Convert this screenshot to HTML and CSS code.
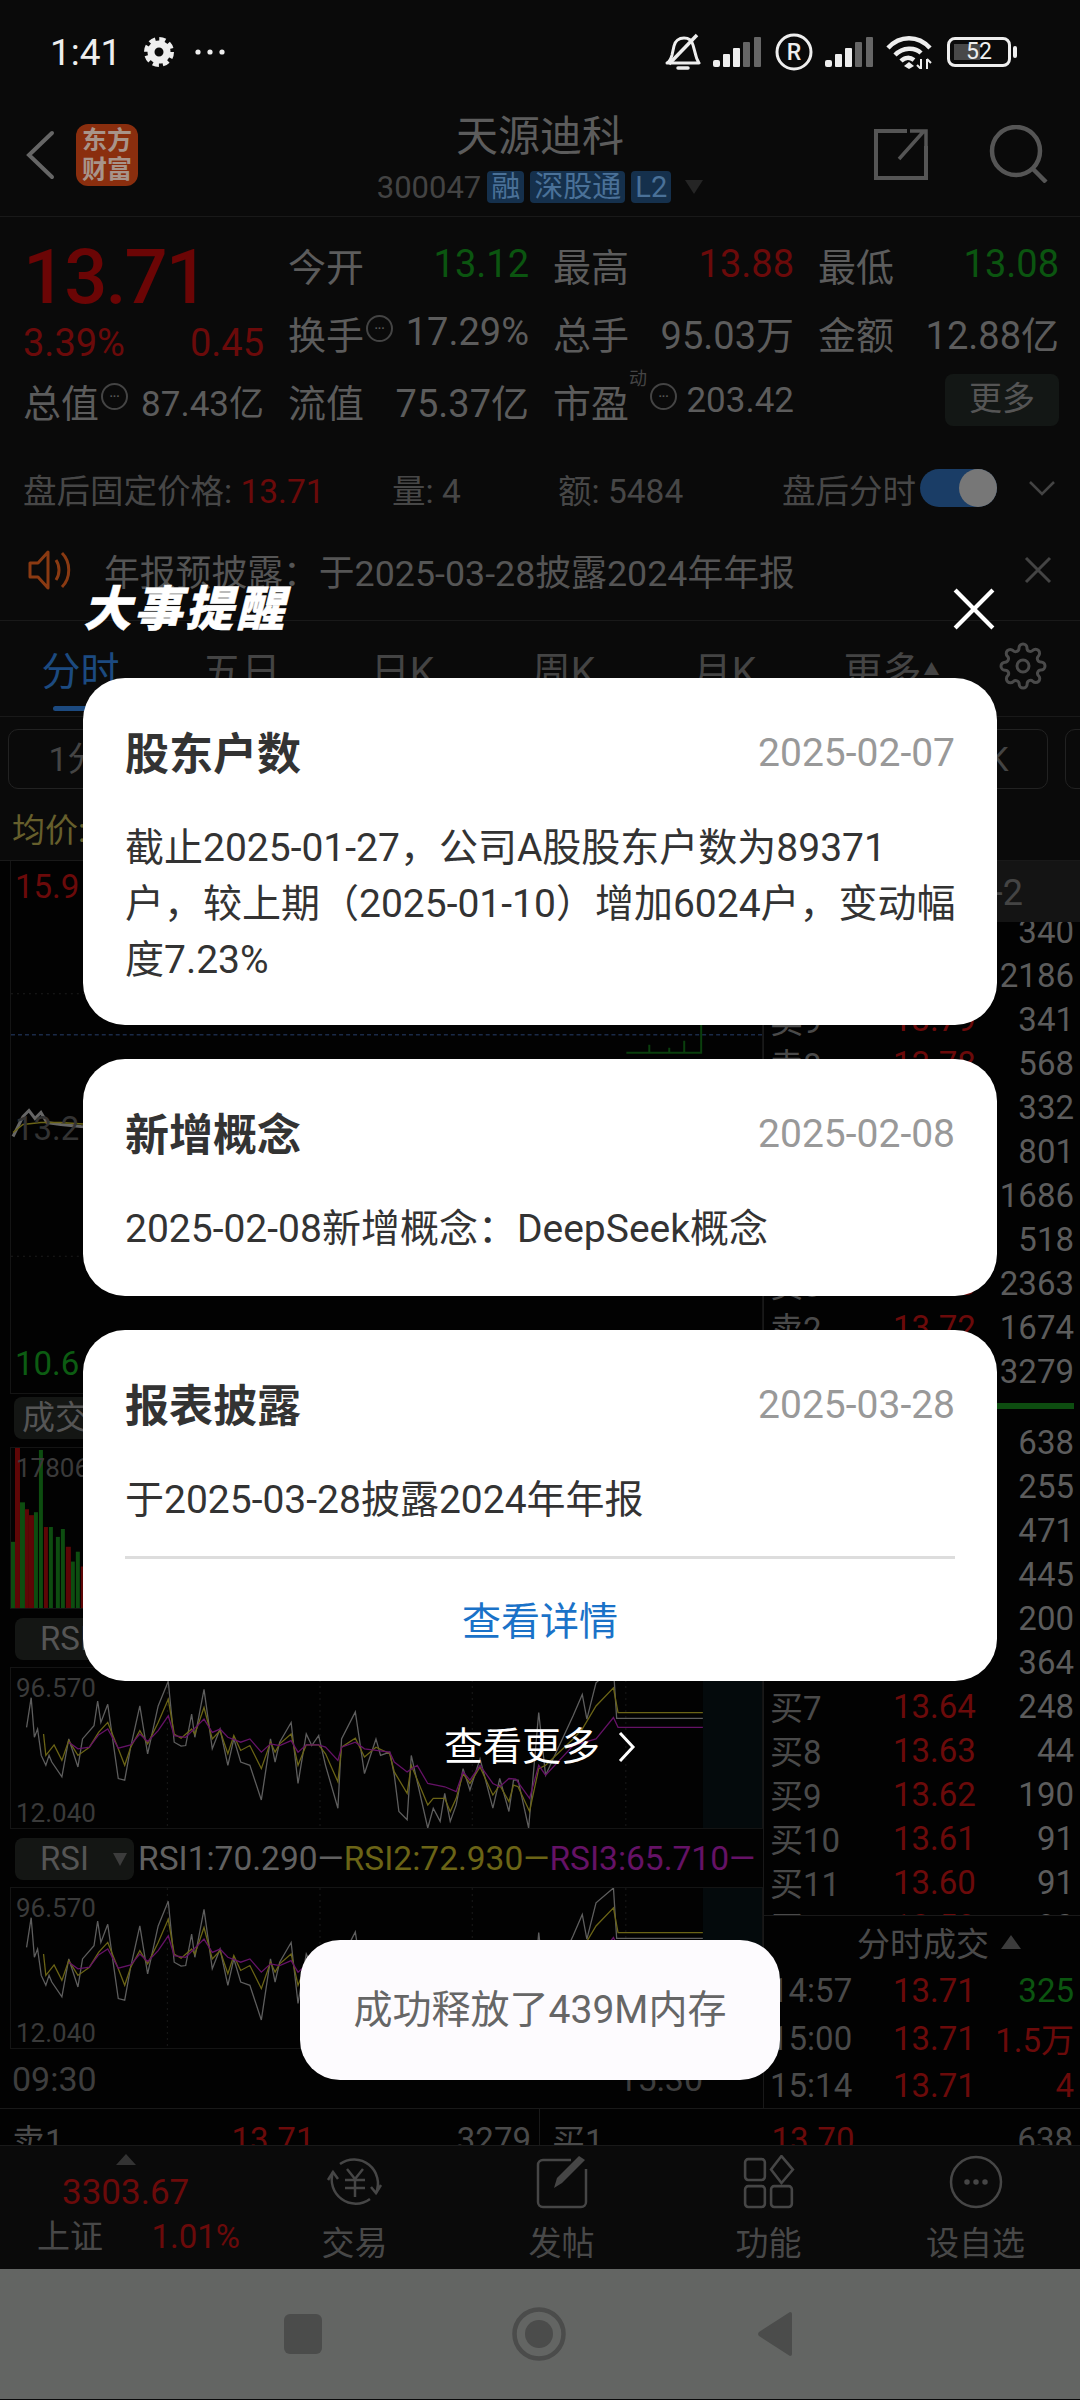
FILE: index.html
```html
<!DOCTYPE html>
<html lang="zh-CN">
<head>
    <meta charset="UTF-8">
    <meta name="viewport" content="width=device-width, initial-scale=1.0">
    <title>天源迪科</title>
    <link rel="stylesheet" href="styles.css">
</head>
<body>
<div class="screen">

    <!-- status bar -->
    <div class="status-bar">
        <div class="status-left">
            <span class="clock">1:41</span>
            <svg class="st-gear" viewBox="0 0 30 32"><circle cx="15" cy="16" r="8" fill="none" stroke="#eee" stroke-width="7"/><circle cx="15" cy="16" r="12.5" fill="none" stroke="#eee" stroke-width="5" stroke-dasharray="6 3.8"/></svg>
            <svg class="st-dots" viewBox="0 0 32 8"><circle cx="4" cy="4" r="2.6" fill="#eee"/><circle cx="16" cy="4" r="2.6" fill="#eee"/><circle cx="28" cy="4" r="2.6" fill="#eee"/></svg>
        </div>
        <div class="status-right">
            <svg class="st-bell" viewBox="0 0 36 38"><path d="M2 30c3-2 4-4 5-8l2-9c1-5 5-8 10-8s8 3 9 7l3 11c.5 3 2 5 3 7z" fill="none" stroke="#eee" stroke-width="3" stroke-linejoin="round"/><path d="M13 35h10" stroke="#eee" stroke-width="3.5" stroke-linecap="round"/><path d="M32 2 4 31" stroke="#eee" stroke-width="3.5"/></svg>
            <svg class="st-signal" viewBox="0 0 48 30"><rect x="0" y="23" width="7" height="7" rx="2" fill="#eee"/><rect x="10" y="17" width="7" height="13" rx="1" fill="#eee"/><rect x="20" y="11" width="7" height="19" rx="1" fill="#eee"/><rect x="30" y="5" width="7" height="25" rx="1" fill="#666"/><rect x="41" y="0" width="7" height="30" rx="1" fill="#666"/></svg>
            <svg class="st-r" viewBox="0 0 38 38"><circle cx="19" cy="19" r="17" fill="none" stroke="#eee" stroke-width="3"/><text x="19" y="27" text-anchor="middle" class="st-r-text">R</text></svg>
            <svg class="st-signal" viewBox="0 0 48 30"><rect x="0" y="23" width="7" height="7" rx="2" fill="#eee"/><rect x="10" y="17" width="7" height="13" rx="1" fill="#eee"/><rect x="20" y="11" width="7" height="19" rx="1" fill="#eee"/><rect x="30" y="5" width="7" height="25" rx="1" fill="#666"/><rect x="41" y="0" width="7" height="30" rx="1" fill="#666"/></svg>
            <svg class="st-wifi" viewBox="0 0 46 34"><path d="M2 13c12-13 30-13 42 0M9 20c8-8 20-8 26-2M15 26c4-4 9-4 13-1" fill="none" stroke="#eee" stroke-width="4.5"/><path d="M23 27l5 4-5 3-5-3z" fill="#eee"/><path d="M35 24v10M31 30l4 4M41 34V24M45 28l-4-4" fill="none" stroke="#eee" stroke-width="2"/></svg>
            <div class="battery"><div class="battery-body"><span class="battery-fill"></span><span class="battery-num">52</span></div><div class="battery-cap"></div></div>
        </div>
    </div>

    <!-- stock header -->
    <div class="stock-head">
        <div class="head-left">
            <svg class="back" viewBox="0 0 30 50"><path d="M27 3 4 25l23 22" fill="none" stroke="#666" stroke-width="4" stroke-linecap="round"/></svg>
            <div class="logo">东方<br>财富</div>
        </div>
        <div class="head-center">
            <div class="stock-name">天源迪科</div>
            <div class="stock-sub">
                <span class="stock-code">300047</span>
                <span class="tag tag-a">融</span>
                <span class="tag tag-b">深股通</span>
                <span class="tag tag-c">L2</span>
                <span class="tag-arrow"></span>
            </div>
        </div>
        <div class="head-right">
            <svg class="share" viewBox="0 0 54 52"><path d="M33 3H2v47h50V18" fill="none" stroke="#555" stroke-width="4"/><path d="M25 31 50 3M36 3h16v16" fill="none" stroke="#555" stroke-width="3.5"/></svg>
            <svg class="search" viewBox="0 0 60 58"><circle cx="27" cy="26" r="24" fill="none" stroke="#555" stroke-width="4.5"/><path d="m43 43 14 14" stroke="#555" stroke-width="4.5"/></svg>
        </div>
    </div>

    <!-- quote block -->
    <div class="quote">
        <div class="price-box">
            <div class="price">13.71</div>
            <div class="price-sub"><span>3.39%</span><span>0.45</span></div>
        </div>
        <div class="cell"><span>今开</span><span class="green">13.12</span></div>
        <div class="cell"><span>最高</span><span class="red">13.88</span></div>
        <div class="cell"><span>最低</span><span class="green">13.08</span></div>
        <div class="cell"><span class="lab">换手<i class="info">···</i></span><span>17.29%</span></div>
        <div class="cell"><span>总手</span><span>95.03万</span></div>
        <div class="cell"><span>金额</span><span>12.88亿</span></div>
        <div class="cell"><span class="lab">总值<i class="info">···</i></span><span class="small-val">87.43亿</span></div>
        <div class="cell"><span>流值</span><span>75.37亿</span></div>
        <div class="cell"><span class="lab">市盈<sup class="dyn">动</sup><i class="info">···</i></span><span class="small-val">203.42</span></div>
        <div class="cell cell-end"><span class="more-btn">更多</span></div>
    </div>

    <!-- after hours -->
    <div class="after">
        <span class="after-price">盘后固定价格: <b class="red">13.71</b></span>
        <span class="after-vol">量: 4</span>
        <span class="after-amt">额: 5484</span>
        <span class="after-time">盘后分时</span>
        <span class="toggle"><span class="toggle-knob"></span></span>
        <svg class="after-arrow" viewBox="0 0 28 16"><path d="m2 2 12 12L26 2" fill="none" stroke="#444" stroke-width="2.5"/></svg>
    </div>

    <!-- notice -->
    <div class="notice">
        <svg class="speaker" viewBox="0 0 46 42"><path d="M2 14h8L20 3v36L10 28H2z" fill="none" stroke="#8a3a12" stroke-width="3" stroke-linejoin="round"/><path d="M28 11c4 6 4 14 0 20M34 4c9 9 9 25 0 34" fill="none" stroke="#8a3a12" stroke-width="3"/></svg>
        <span class="notice-text">年报预披露：于2025-03-28披露2024年年报</span>
        <svg class="notice-close" viewBox="0 0 28 28"><path d="m2 2 24 24M26 2 2 26" stroke="#444" stroke-width="3"/></svg>
    </div>

    <!-- chart tabs -->
    <div class="tabs">
        <div class="tab tab-on">分时<span class="tab-line"></span></div>
        <div class="tab">五日</div>
        <div class="tab">日K</div>
        <div class="tab">周K</div>
        <div class="tab">月K</div>
        <div class="tab tab-more">更多<small>▲</small></div>
        <svg class="tab-gear" viewBox="0 0 24 24" fill="none" stroke="#4a4a4a" stroke-width="1.5"><path d="M12 15a3 3 0 1 0 0-6 3 3 0 0 0 0 6z"/><path d="M19.4 15a1.65 1.65 0 0 0 .33 1.82l.06.06a2 2 0 0 1 0 2.83 2 2 0 0 1-2.83 0l-.06-.06a1.65 1.65 0 0 0-1.82-.33 1.65 1.65 0 0 0-1 1.51V21a2 2 0 0 1-2 2 2 2 0 0 1-2-2v-.09A1.65 1.65 0 0 0 9 19.4a1.65 1.65 0 0 0-1.82.33l-.06.06a2 2 0 0 1-2.83 0 2 2 0 0 1 0-2.83l.06-.06a1.65 1.65 0 0 0 .33-1.82 1.65 1.65 0 0 0-1.51-1H3a2 2 0 0 1-2-2 2 2 0 0 1 2-2h.09A1.65 1.65 0 0 0 4.6 9a1.65 1.65 0 0 0-.33-1.82l-.06-.06a2 2 0 0 1 0-2.83 2 2 0 0 1 2.83 0l.06.06a1.65 1.65 0 0 0 1.82.33H9a1.65 1.65 0 0 0 1-1.51V3a2 2 0 0 1 2-2 2 2 0 0 1 2 2v.09a1.65 1.65 0 0 0 1 1.51 1.65 1.65 0 0 0 1.82-.33l.06-.06a2 2 0 0 1 2.83 0 2 2 0 0 1 0 2.83l-.06.06a1.65 1.65 0 0 0-.33 1.82V9a1.65 1.65 0 0 0 1.51 1H21a2 2 0 0 1 2 2 2 2 0 0 1-2 2h-.09a1.65 1.65 0 0 0-1.51 1z"/></svg>
    </div>

    <div class="periods">
        <div class="period">1分</div>
        <div class="period">5分</div>
        <div class="period">15分</div>
        <div class="period">30分</div>
        <div class="period">60分</div>
        <div class="period">季K</div>
        <div class="period">年K</div>
        <div class="period"></div>
    </div>

    <div class="avg-row"><span class="avg">均价:13.27</span></div>

    <!-- charts + order book -->
    <div class="market">
        <div class="charts">
            <div class="main-chart">
                <svg class="chart-svg" viewBox="0 0 753 533" preserveAspectRatio="none">
                    <path d="M0 133H753M0 396H753" stroke="#1c1c1c" stroke-width="1" stroke-dasharray="2 4"/>
                    <path d="M0 174H753" stroke="#1a2a48" stroke-width="1.5" stroke-dasharray="4 3"/>
                    <path d="M617 192h75v-28M640 192v-8M660 192v-5M675 192v-12" fill="none" stroke="#0a3f0d" stroke-width="2"/>
                    <path d="M2 276 8 264 12 256 18 250 24 258 30 252 36 262 50 264 70 266 110 268" fill="none" stroke="#666" stroke-width="3"/>
                    <path d="M2 272 12 264 30 262 50 262 110 266" fill="none" stroke="#6b6416" stroke-width="1.5"/>
                </svg>
                <span class="axis-red">15.9</span>
                <span class="axis-mid">13.2</span>
                <span class="axis-green">10.6</span>
            </div>
            <div class="ind-tab ind-tab-wide">成交量</div>
            <div class="vol-chart">
                <svg class="chart-svg" viewBox="0 0 753 162" preserveAspectRatio="none">
                    <g fill="#0d4d10">
                        <rect x="0" y="95" width="4" height="67"/><rect x="9" y="55" width="5" height="107"/><rect x="23" y="65" width="4" height="97"/><rect x="28" y="2" width="4" height="160"/><rect x="38" y="80" width="4" height="82"/><rect x="45" y="90" width="4" height="72"/><rect x="50" y="82" width="4" height="80"/><rect x="60" y="115" width="4" height="47"/><rect x="65" y="105" width="4" height="57"/>
                    </g>
                    <g fill="#5e0606">
                        <rect x="4" y="0" width="5" height="162"/><rect x="14" y="62" width="4" height="100"/><rect x="18" y="68" width="5" height="94"/><rect x="33" y="80" width="4" height="82"/><rect x="55" y="100" width="5" height="62"/><rect x="70" y="120" width="4" height="42"/>
                    </g>
                </svg>
                <span class="axis-small">17806</span>
            </div>
            <div class="ind-row"><div class="ind-tab">RSI<i class="ind-arrow"></i></div></div>
            <div class="rsi-chart">
                <svg class="chart-svg" viewBox="24 25 1638 485" preserveAspectRatio="none">
                    <defs>
                        <g id="rsi-lines">
                            <path d="M365 25V510M698 25V510M1030 25V510M1365 25V510" stroke="#1a1a1a" stroke-width="1" stroke-dasharray="2 4" vector-effect="non-scaling-stroke"/>
                            <rect x="1533" y="25" width="129" height="485" fill="#040a0c"/>
                            <polyline class="ln-gray" points="58,205 68,115 75,235 82,210 90,290 100,320 107,290 113,310 135,355 150,240 170,325 180,240 205,200 213,125 220,190 235,135 258,360 272,365 285,265 305,140 322,285 345,140 367,65 380,250 395,262 405,260 418,165 425,235 445,90 463,270 480,210 497,320 510,240 525,310 545,320 570,425 590,240 600,310 610,250 635,190 650,375 668,225 680,260 695,230 710,320 737,450 745,240 775,158 795,345 820,240 830,290 850,280 860,350 870,460 888,485 897,290 933,510 945,450 960,490 970,405 982,490 995,440 1010,330 1025,395 1047,300 1075,450 1090,360 1110,460 1120,365 1130,365 1153,510 1175,160 1190,350 1200,320 1250,170 1270,105 1280,180 1300,70 1338,25 1345,178 1533,178"/>
                            <polyline class="ln-yellow" points="95,225 100,290 118,258 135,305 150,245 170,290 195,265 215,220 235,190 258,270 272,320 285,265 305,215 322,255 345,190 367,120 380,225 395,238 418,210 425,225 445,145 463,240 480,215 497,285 510,230 525,275 545,260 570,330 590,250 600,280 610,255 635,225 650,320 668,258 695,258 710,285 737,370 745,265 775,238 795,295 820,265 850,285 860,340 888,405 897,320 933,440 945,420 970,420 982,460 995,420 1010,345 1025,375 1047,325 1075,410 1090,380 1110,430 1120,380 1130,385 1155,460 1175,330 1190,320 1250,240 1270,210 1300,140 1338,85 1348,160 1533,160"/>
                            <polyline class="ln-purple" points="150,250 170,270 195,265 215,228 235,210 258,268 285,258 305,225 322,248 345,215 367,170 380,230 405,235 445,180 463,220 480,210 497,235 525,250 545,240 570,280 590,255 610,260 635,245 650,280 668,258 695,258 710,265 737,305 745,265 775,250 795,270 850,280 860,310 888,340 910,320 933,375 970,385 995,400 1010,340 1025,365 1047,320 1075,375 1090,385 1110,360 1125,362 1155,420 1175,320 1190,350 1250,260 1300,240 1338,175 1348,205 1533,205"/>
                        </g>
                    </defs>
                    <use href="#rsi-lines"/>
                </svg>
                <span class="axis-small">96.570</span>
                <span class="axis-small axis-low">12.040</span>
            </div>
            <div class="ind-row">
                <div class="ind-tab">RSI<i class="ind-arrow"></i></div>
                <div class="legend"><span class="lg-gray">RSI1:70.290—</span><span class="lg-yellow">RSI2:72.930—</span><span class="lg-purple">RSI3:65.710—</span></div>
            </div>
            <div class="rsi-chart">
                <svg class="chart-svg" viewBox="24 25 1638 485" preserveAspectRatio="none"><use href="#rsi-lines"/></svg>
                <span class="axis-small">96.570</span>
                <span class="axis-small axis-low">12.040</span>
            </div>
            <div class="time-axis"><span>09:30</span><span>15:30</span></div>
        </div>

        <div class="book">
            <div class="book-head">-2</div>
            <div class="book-rows">
                <div class="book-sell">
                    <div class="row"><span>卖11</span><b>13.81</b><span>340</span></div>
                    <div class="row"><span>卖10</span><b>13.80</b><span>2186</span></div>
                    <div class="row"><span>卖9</span><b>13.79</b><span>341</span></div>
                    <div class="row"><span>卖8</span><b>13.78</b><span>568</span></div>
                    <div class="row"><span>卖7</span><b>13.77</b><span>332</span></div>
                    <div class="row"><span>卖6</span><b>13.76</b><span>801</span></div>
                    <div class="row"><span>卖5</span><b>13.75</b><span>1686</span></div>
                    <div class="row"><span>卖4</span><b>13.74</b><span>518</span></div>
                    <div class="row"><span>卖3</span><b>13.73</b><span>2363</span></div>
                    <div class="row"><span>卖2</span><b>13.72</b><span>1674</span></div>
                    <div class="row"><span>卖1</span><b>13.71</b><span>3279</span></div>
                </div>
                <div class="book-bar"></div>
                <div class="row"><span>买1</span><b>13.70</b><span>638</span></div>
                <div class="row"><span>买2</span><b>13.69</b><span>255</span></div>
                <div class="row"><span>买3</span><b>13.68</b><span>471</span></div>
                <div class="row"><span>买4</span><b>13.67</b><span>445</span></div>
                <div class="row"><span>买5</span><b>13.66</b><span>200</span></div>
                <div class="row"><span>买6</span><b>13.65</b><span>364</span></div>
                <div class="row"><span>买7</span><b>13.64</b><span>248</span></div>
                <div class="row"><span>买8</span><b>13.63</b><span>44</span></div>
                <div class="row"><span>买9</span><b>13.62</b><span>190</span></div>
                <div class="row"><span>买10</span><b>13.61</b><span>91</span></div>
                <div class="row"><span>买11</span><b>13.60</b><span>91</span></div>
                <div class="row"><span>买12</span><b>13.59</b><span>90</span></div>
            </div>
            <div class="ticks-head">分时成交<i class="ticks-arrow"></i></div>
            <div class="tick"><span>14:57</span><b>13.71</b><span class="green">325</span></div>
            <div class="tick"><span>15:00</span><b>13.71</b><span class="red">1.5万</span></div>
            <div class="tick"><span>15:14</span><b>13.71</b><span class="red">4</span></div>
        </div>
    </div>

    <div class="level-one">
        <div class="level-side"><span>卖1</span><b>13.71</b><span>3279</span></div>
        <div class="level-side level-buy"><span>买1</span><b>13.70</b><span>638</span></div>
    </div>

    <!-- bottom tool bar -->
    <div class="toolbar">
        <div class="index-box">
            <i class="index-arrow"></i>
            <div class="index-val">3303.67</div>
            <div class="index-sub"><span>上证</span><span class="red">1.01%</span></div>
        </div>
        <div class="tool">
            <svg viewBox="0 0 62 54" fill="none" stroke="#464646" stroke-width="2.5"><path d="M16 9A24 24 0 0 1 52 38M46 44A24 24 0 0 1 9 17"/><path d="m4 25 5-8 5 7M57 30l-5 8-5-6"/><path d="m23 14 8 10 8-10M21 25h20M21 33h20M31 24v18"/></svg>
            <span>交易</span>
        </div>
        <div class="tool">
            <svg viewBox="0 0 54 54" fill="none" stroke="#464646" stroke-width="2.5"><path d="M36 5H8a5 5 0 0 0-5 5v37a5 5 0 0 0 5 5h38a5 5 0 0 0 5-5V14"/><path d="m19 33 3-10L44 1l6 4-23 23z" fill="#464646" stroke="none"/></svg>
            <span>发帖</span>
        </div>
        <div class="tool">
            <svg viewBox="0 0 50 52" fill="none" stroke="#464646" stroke-width="2.5"><rect x="2" y="4" width="19" height="20" rx="3"/><path d="m37 1 11 13-11 13-10-13z"/><rect x="2" y="30" width="19" height="20" rx="3"/><rect x="27" y="30" width="20" height="20" rx="3"/></svg>
            <span>功能</span>
        </div>
        <div class="tool">
            <svg viewBox="0 0 54 54" fill="none" stroke="#464646" stroke-width="2.5"><circle cx="27" cy="27" r="25"/><circle cx="18" cy="27" r="1.5" fill="#464646"/><circle cx="27" cy="27" r="1.5" fill="#464646"/><circle cx="36" cy="27" r="1.5" fill="#464646"/></svg>
            <span>设自选</span>
        </div>
    </div>

    <!-- android nav bar -->
    <div class="sys-nav">
        <span class="sys-square"></span>
        <svg class="sys-home" viewBox="0 0 54 54"><circle cx="27" cy="27" r="24.5" fill="none" stroke="#4b4c4b" stroke-width="4.5"/><circle cx="27" cy="27" r="14" fill="#4b4c4b"/></svg>
        <svg class="sys-back" viewBox="0 0 36 46"><path d="M33 1a2 2 0 0 1 2 2v40a2 2 0 0 1-2 2L2 25a3 3 0 0 1 0-4z" fill="#4b4c4b"/></svg>
    </div>

    <!-- popup over the app -->
    <div class="modal">
        <div class="modal-top">
            <span class="modal-title">大事提醒</span>
            <svg class="modal-close" viewBox="0 0 40 40"><path d="m2 2 36 36M38 2 2 38" stroke="#fff" stroke-width="4"/></svg>
        </div>
        <div class="card">
            <div class="card-head"><span class="card-title">股东户数</span><span class="card-date">2025-02-07</span></div>
            <p class="card-body">截止2025-01-27，公司A股股东户数为89371<br>户，较上期（2025-01-10）增加6024户，变动幅<br>度7.23%</p>
        </div>
        <div class="card card-short">
            <div class="card-head"><span class="card-title">新增概念</span><span class="card-date">2025-02-08</span></div>
            <p class="card-body">2025-02-08新增概念：DeepSeek概念</p>
        </div>
        <div class="card card-link">
            <div class="card-head"><span class="card-title">报表披露</span><span class="card-date">2025-03-28</span></div>
            <p class="card-body">于2025-03-28披露2024年年报</p>
            <div class="card-detail">查看详情</div>
        </div>
        <div class="see-more">查看更多<svg viewBox="0 0 18 32"><path d="m2 2 13 14L2 30" fill="none" stroke="#fff" stroke-width="3"/></svg></div>
    </div>

    <div class="toast">成功释放了439M内存</div>
</div>
</body>
</html>
```

FILE: styles.css
```css
* {
    box-sizing: border-box;
}

body {
    margin: 0;
    background: #000;
}

.screen {
    position: relative;
    width: 1080px;
    height: 2400px;
    overflow: hidden;
    background: #0a0a0a;
    color: #5c5c5c;
    font-family: Roboto, "Noto Sans CJK SC", sans-serif;
    font-size: 38px;
}

.red { color: #6b0a0a; font-weight: 400; }
.green { color: #0b5510; }

/* status bar */
.status-bar {
    height: 100px;
    padding: 4px 63px 0 50px;
    display: flex;
    justify-content: space-between;
    align-items: center;
    color: #eee;
}

.status-left, .status-right {
    display: flex;
    align-items: center;
}

.clock {
    font-size: 37px;
    width: 94px;
}

.st-gear { width: 30px; height: 32px; }
.st-dots { width: 32px; height: 8px; margin-left: 20px; }
.st-bell { width: 36px; height: 38px; }
.st-signal { width: 48px; height: 30px; margin-left: 12px; }
.st-r { width: 38px; height: 38px; margin-left: 14px; }
.st-r-text { font-size: 23px; font-weight: 500; fill: #eee; font-family: Roboto, sans-serif; }
.st-wifi { width: 46px; height: 34px; margin-left: 13px; }

.battery {
    margin-left: 15px;
    display: flex;
    align-items: center;
}

.battery-body {
    position: relative;
    width: 64px;
    height: 30px;
    padding: 4px;
    border: 3px solid #eee;
    border-radius: 8px;
    text-align: center;
}

.battery-fill {
    display: block;
    width: 52%;
    height: 100%;
    background: #484848;
}

.battery-num {
    position: absolute;
    inset: 0;
    font-size: 23px;
    line-height: 24px;
    color: #eee;
}

.battery-cap {
    width: 4px;
    height: 12px;
    margin-left: 2px;
    background: #eee;
    border-radius: 2px;
}

/* stock header */
.stock-head {
    height: 117px;
    display: grid;
    grid-template-columns: 1fr auto 1fr;
    border-bottom: 1px solid #191919;
}

.head-left {
    display: flex;
    align-items: center;
    padding: 0 0 7px 25px;
}

.back { width: 30px; height: 50px; }

.logo {
    width: 62px;
    height: 62px;
    margin-left: 21px;
    border-radius: 12px;
    background: #8a2e0e;
    color: #a8948a;
    font-size: 25px;
    font-weight: 700;
    line-height: 29px;
    text-align: center;
    padding-top: 2px;
}

.head-center {
    text-align: center;
    padding-top: 10px;
}

.stock-name {
    font-size: 42px;
    line-height: 54px;
    color: #5c5c5c;
}

.stock-sub {
    display: flex;
    align-items: center;
    gap: 6px;
    height: 34px;
    margin-top: 6px;
}

.stock-code { font-size: 31px; color: #434343; }

.tag {
    height: 32px;
    padding: 0 4px;
    border-radius: 4px;
    background: #15304c;
    color: #4a7198;
    font-size: 29px;
    line-height: 32px;
}

.tag-arrow {
    width: 0;
    height: 0;
    margin-left: 8px;
    border: 9px solid transparent;
    border-top: 14px solid #252525;
    border-bottom: 0;
}

.head-right {
    display: flex;
    justify-content: flex-end;
    align-items: center;
    padding: 0 31px 8px 0;
}

.share { width: 54px; height: 52px; }
.search { width: 60px; height: 58px; margin-left: 61px; }

/* quote */
.quote {
    height: 229px;
    padding: 13px 24px 0 23px;
    display: grid;
    grid-template-columns: repeat(4, 241px);
    grid-auto-rows: 68px;
    column-gap: 24px;
}

.price-box { grid-row: span 2; }

.price {
    color: #6b0505;
    font-size: 76px;
    font-weight: 500;
    letter-spacing: -2px;
    line-height: 76px;
    margin-top: 9px;
}

.price-sub {
    display: flex;
    justify-content: space-between;
    margin-top: 7px;
    color: #6b0a0a;
    font-size: 38px;
    line-height: 42px;
}

.cell {
    display: flex;
    justify-content: space-between;
    align-items: center;
}

.cell-end { justify-content: flex-end; }

.lab {
    position: relative;
    display: flex;
    align-items: center;
}

.info {
    width: 27px;
    height: 27px;
    margin: -8px 0 0 2px;
    border: 2px solid #444;
    border-radius: 50%;
    color: #555;
    font-family: "DejaVu Sans", sans-serif;
    font-size: 9px;
    font-style: normal;
    font-weight: 700;
    line-height: 22px;
    text-align: center;
}

.dyn {
    position: absolute;
    top: -4px;
    left: 76px;
    font-size: 18px;
    color: #444;
    line-height: 20px;
}

.lab .dyn + .info { margin-left: 21px; }

.small-val { font-size: 35px; }

.more-btn {
    width: 114px;
    height: 52px;
    border-radius: 8px;
    background: #131715;
    color: #555;
    font-size: 33px;
    line-height: 50px;
    text-align: center;
}

/* after hours */
.after {
    height: 84px;
    display: flex;
    align-items: center;
    padding-left: 23px;
    font-size: 33.5px;
    color: #474747;
}

.after-price { width: 369px; }
.after-vol { width: 166px; }
.after-amt { width: 224px; }
.after-time { width: 138px; }

.toggle {
    width: 77px;
    height: 38px;
    border-radius: 19px;
    background: #1a3d66;
    display: flex;
    justify-content: flex-end;
}

.toggle-knob {
    width: 38px;
    height: 38px;
    border-radius: 50%;
    background: #777;
}

.after-arrow { width: 28px; height: 16px; margin-left: 31px; }

/* notice */
.notice {
    height: 91px;
    padding: 0 28px 11px 28px;
    display: flex;
    align-items: center;
    border-bottom: 1px solid #191919;
    font-size: 35.8px;
    color: #555;
}

.speaker { width: 46px; height: 42px; }
.notice-text { margin-left: 30px; flex: 1; }
.notice-close { width: 28px; height: 28px; }

/* tabs */
.tabs {
    height: 96px;
    display: flex;
    padding-bottom: 2px;
    border-bottom: 1px solid #191919;
    font-size: 39px;
    color: #444;
}

.tab {
    position: relative;
    width: 161px;
    display: flex;
    align-items: center;
    justify-content: center;
}

.tab small { font-size: 16px; margin-left: 2px; }
.tab-more { padding-left: 12px; }
.tab-on { color: #1c4a80; }

.tab-line {
    position: absolute;
    left: 53px;
    bottom: 3px;
    width: 56px;
    height: 5px;
    border-radius: 3px;
    background: #1c4a80;
}

.tab-gear { width: 48px; height: 48px; margin: 21px 0 0 33px; }

.periods {
    height: 82px;
    padding: 12px 0 10px 8px;
    display: flex;
    gap: 17px;
}

.period {
    flex: 0 0 134px;
    height: 60px;
    border: 1px solid #222;
    border-radius: 10px;
    color: #444;
    font-size: 34px;
    line-height: 58px;
    text-align: center;
}

.avg-row {
    height: 62px;
    padding-left: 12px;
    border-bottom: 1px solid #191919;
    font-size: 33px;
    line-height: 64px;
    color: #665f2c;
}

/* chart column + order book */
.market {
    height: 1247px;
    display: flex;
    background: #020202;
}

.charts {
    width: 763px;
    padding-left: 10px;
}

.main-chart {
    position: relative;
    height: 533px;
    border: 1px solid #141414;
    border-top: 0;
}

.chart-svg {
    position: absolute;
    inset: 0;
    width: 100%;
    height: 100%;
}

.axis-red, .axis-mid, .axis-green {
    position: absolute;
    left: 4px;
    font-size: 33px;
    line-height: 40px;
}

.axis-red { top: 6px; color: #6b0a0a; }
.axis-mid { top: 248px; color: #333; }
.axis-green { top: 483px; color: #0c5c12; }

.axis-small {
    position: absolute;
    left: 5px;
    top: 5px;
    font-size: 26px;
    line-height: 30px;
    color: #3a3a3a;
}

.axis-low { top: auto; bottom: 0; }

.ind-tab {
    width: 119px;
    height: 42px;
    padding-left: 25px;
    border-radius: 8px;
    background: #141614;
    color: #555;
    font-size: 33px;
    line-height: 42px;
    position: relative;
    flex: none;
}

.ind-tab-wide {
    margin: 3px 0 0 4px;
    padding-left: 8px;
    width: 130px;
}

.ind-arrow {
    position: absolute;
    left: 98px;
    top: 15px;
    border: 7px solid transparent;
    border-top: 13px solid #3c3c3c;
    border-bottom: 0;
}

.ind-row {
    height: 58px;
    padding: 9px 0 7px 5px;
    display: flex;
}

.legend {
    margin-left: 4px;
    font-size: 33.5px;
    line-height: 42px;
    white-space: nowrap;
}

.lg-gray { color: #616161; }
.lg-yellow { color: #6b6416; }
.lg-purple { color: #651266; }

.vol-chart, .rsi-chart {
    position: relative;
    height: 162px;
    border: 1px solid #141414;
}

.vol-chart { margin-top: 8px; }
.vol-chart + .ind-row { height: 58px; }

.ln-gray, .ln-yellow, .ln-purple {
    fill: none;
    stroke-width: 1.3;
    vector-effect: non-scaling-stroke;
}

.ln-gray { stroke: #5e5e5e; }
.ln-yellow { stroke: #6b6416; }
.ln-purple { stroke: #651266; }

.time-axis {
    height: 59px;
    padding: 0 60px 0 2px;
    display: flex;
    justify-content: space-between;
    align-items: center;
    font-size: 34px;
    color: #3e3e3e;
}

.book {
    width: 317px;
    border-left: 1px solid #191919;
    font-size: 33px;
}

.book-head {
    height: 61px;
    padding-right: 57px;
    background: #141414;
    text-align: right;
    line-height: 64px;
    color: #444;
    font-size: 36px;
}

.book-rows {
    height: 994px;
    overflow: hidden;
    border-bottom: 1px solid #191919;
}

.book-sell { margin-top: -13px; }

.row, .tick {
    display: flex;
    align-items: center;
    padding: 0 6px 0 6px;
    height: 44px;
}

.row b, .tick b {
    flex: 1;
    margin-left: 0;
    font-weight: 400;
    color: #6b0a0a;
}

.row span:first-child {
    width: 123px;
    color: #4a4a4a;
}

.tick span:first-child {
    width: 123px;
    color: #4a4a4a;
}

.book-bar {
    height: 6px;
    margin: 10px 6px 11px 0;
    background: #0d4d10;
}

.ticks-head {
    height: 51px;
    margin-top: 0;
    padding-left: 93px;
    display: flex;
    align-items: center;
    color: #4a4a4a;
}

.ticks-arrow {
    margin-left: 12px;
    border: 10px solid transparent;
    border-bottom: 14px solid #3c3c3c;
    border-top: 0;
}

.tick { height: 47.5px; }

/* row half hidden by the toolbar */
.level-one {
    height: 37px;
    display: flex;
    overflow: hidden;
    border-top: 1px solid #191919;
    background: #020202;
    font-size: 33px;
    color: #4a4a4a;
}

.level-side {
    width: 540px;
    height: 60px;
    padding: 0 8px 0 12px;
    display: flex;
    align-items: center;
    border-right: 1px solid #191919;
}

.level-buy {
    width: 540px;
    padding: 0 7px 0 12px;
    border-right: 0;
}

.level-side b {
    flex: 1;
    padding-left: 168px;
    font-weight: 400;
    color: #6b0a0a;
}

.level-buy b { padding-left: 168px; }

/* toolbar */
.toolbar {
    height: 124px;
    display: flex;
    border-top: 1px solid #191919;
    background: #0a0a0a;
    font-size: 33px;
    color: #484848;
}

.index-box {
    width: 251px;
    position: relative;
    padding: 25px 11px 0 37px;
}

.index-arrow {
    position: absolute;
    left: 116px;
    top: 8px;
    border: 10px solid transparent;
    border-bottom: 11px solid #333;
    border-top: 0;
}

.index-val {
    margin-left: 25px;
    font-size: 35px;
    line-height: 44px;
    color: #6b0a0a;
}

.index-sub {
    display: flex;
    justify-content: space-between;
    line-height: 44px;
}

.tool {
    width: 207px;
    display: flex;
    flex-direction: column;
    align-items: center;
    padding-top: 9px;
}

.tool svg { width: 62px; height: 54px; }
.tool span { line-height: 44px; margin-top: 13px; }

/* system nav */
.sys-nav {
    height: 130px;
    position: relative;
    display: flex;
    align-items: center;
    padding-left: 284px;
    background: #636563;
}

.sys-square {
    width: 38px;
    height: 40px;
    border-radius: 6px;
    background: #4b4c4b;
}

.sys-home { width: 54px; height: 54px; margin-left: 190px; }
.sys-back { width: 36px; height: 46px; margin-left: 191px; }

/* popup */
.modal {
    position: absolute;
    inset: 0;
    padding: 588px 83px 0 83px;
    display: flex;
    flex-direction: column;
}

.modal-top {
    height: 90px;
    display: flex;
    justify-content: space-between;
    align-items: flex-start;
}

.modal-title {
    color: #fff;
    font-size: 48px;
    font-weight: 900;
    font-style: italic;
    line-height: 44px;
    letter-spacing: 3px;
    -webkit-text-stroke: 0.5px #fff;
}

.modal-close { width: 42px; height: 42px; margin: 0 2px 0 0; }

.card {
    padding: 42px 42px 37px;
    margin-bottom: 34px;
    border-radius: 42px;
    background: #fff;
    color: #333;
}

.card-short { padding-bottom: 39px; }

.card-head {
    display: flex;
    justify-content: space-between;
    align-items: center;
    height: 66px;
}

.card-title {
    padding-bottom: 4px;
    font-size: 44px;
    font-weight: 700;
}

.card-date {
    font-size: 39px;
    color: #999;
}

.card-body {
    margin: 34px 0 0;
    font-size: 39px;
    line-height: 56px;
    white-space: nowrap;
}

.card-link { padding-bottom: 0; margin-bottom: 0; }

.card-detail {
    margin-top: 28px;
    height: 125px;
    border-top: 3px solid #ddd;
    color: #1a72c8;
    font-size: 39px;
    line-height: 126px;
    text-align: center;
}

.see-more {
    margin-top: 40px;
    display: flex;
    justify-content: center;
    align-items: center;
    gap: 18px;
    color: #fff;
    font-size: 39px;
    line-height: 52px;
}

.see-more svg { width: 18px; height: 32px; }

.toast {
    position: absolute;
    left: 300px;
    top: 1940px;
    width: 480px;
    height: 140px;
    border-radius: 40px;
    background: #fdfbfe;
    color: #666;
    font-size: 39px;
    line-height: 140px;
    text-align: center;
}
```
